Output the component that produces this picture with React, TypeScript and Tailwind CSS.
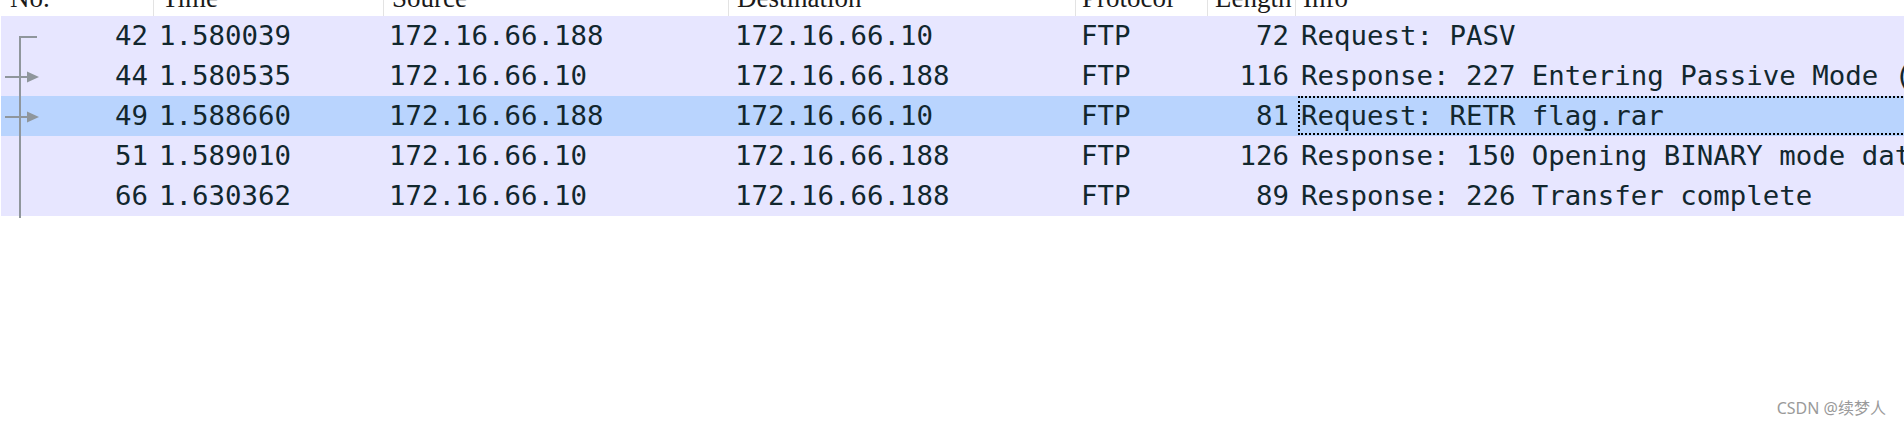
import React from "react";

type Row = {
  no: string;
  time: string;
  src: string;
  dst: string;
  proto: string;
  len: string;
  info: string;
  selected?: boolean;
  tree: "start" | "arrow" | "line" | "end";
};

const rows: Row[] = [
  { no: "42", time: "1.580039", src: "172.16.66.188", dst: "172.16.66.10", proto: "FTP", len: "72", info: "Request: PASV", tree: "start" },
  { no: "44", time: "1.580535", src: "172.16.66.10", dst: "172.16.66.188", proto: "FTP", len: "116", info: "Response: 227 Entering Passive Mode (172,16,66,10,195,80)", tree: "arrow" },
  { no: "49", time: "1.588660", src: "172.16.66.188", dst: "172.16.66.10", proto: "FTP", len: "81", info: "Request: RETR flag.rar", selected: true, tree: "arrow" },
  { no: "51", time: "1.589010", src: "172.16.66.10", dst: "172.16.66.188", proto: "FTP", len: "126", info: "Response: 150 Opening BINARY mode data connection for flag.rar", tree: "line" },
  { no: "66", time: "1.630362", src: "172.16.66.10", dst: "172.16.66.188", proto: "FTP", len: "89", info: "Response: 226 Transfer complete", tree: "end" },
];

const LINE = "#8f969c";

function Tree({ kind }: { kind: Row["tree"] }) {
  return (
    <svg
      width="44"
      height="40"
      viewBox="0 0 44 40"
      className="absolute left-[-1px] top-0 overflow-visible"
    >
      {kind === "start" && (
        <>
          <rect x="19" y="20" width="18" height="2" fill={LINE} />
          <rect x="19" y="20" width="2" height="20" fill={LINE} />
        </>
      )}
      {kind === "arrow" && (
        <>
          <rect x="19" y="0" width="2" height="40" fill={LINE} />
          <rect x="5" y="20" width="23" height="2" fill={LINE} />
          <polygon points="27,15.5 39,21 27,26.5" fill={LINE} />
        </>
      )}
      {kind === "line" && <rect x="19" y="0" width="2" height="40" fill={LINE} />}
      {kind === "end" && <rect x="19" y="0" width="2" height="42" fill={LINE} />}
    </svg>
  );
}

const mono = "font-['DejaVu_Sans_Mono','Liberation_Mono',monospace] text-[27.4px] leading-[40px] text-[#12272e] whitespace-pre";

export default function App() {
  return (
    <div className="relative w-[1904px] h-[427px] overflow-hidden bg-white">
      {/* header */}
      <div className="flex h-[16px] overflow-hidden pl-[1px] bg-white font-['Liberation_Serif','Times_New_Roman',serif] text-[27px] leading-[27px] text-[#1a1a1a] whitespace-nowrap">
        <div className="w-[153px] shrink-0 border-r border-[#e3e3e3] pl-[9px]"><div className="-mt-[15px]">No.</div></div>
        <div className="w-[230px] shrink-0 border-r border-[#e3e3e3] pl-[8px]"><div className="-mt-[15px]">Time</div></div>
        <div className="w-[345px] shrink-0 border-r border-[#e3e3e3] pl-[8px]"><div className="-mt-[15px]">Source</div></div>
        <div className="w-[347px] shrink-0 border-r border-[#e3e3e3] pl-[8px]"><div className="-mt-[15px]">Destination</div></div>
        <div className="w-[132px] shrink-0 border-r border-[#e3e3e3] pl-[6px]"><div className="-mt-[15px]">Protocol</div></div>
        <div className="w-[88px] shrink-0 border-r border-[#e3e3e3] pl-[7px]"><div className="-mt-[15px]">Length</div></div>
        <div className="flex-1 pl-[7px]"><div className="-mt-[15px]">Info</div></div>
      </div>

      {/* rows */}
      <div className="pl-[1px]">
        {rows.map((r) => (
          <div
            key={r.no}
            className={`flex h-[40px] ${r.selected ? "bg-[#b9d4fe]" : "bg-[#e7e6ff]"} ${mono}`}
          >
            <div className="relative w-[153px] shrink-0 pr-[6px] text-right">
              <Tree kind={r.tree} />
              {r.no}
            </div>
            <div className="w-[230px] shrink-0 pl-[5px]">{r.time}</div>
            <div className="w-[345px] shrink-0 pl-[5px]">{r.src}</div>
            <div className="w-[347px] shrink-0 pl-[6px]">{r.dst}</div>
            <div className="w-[132px] shrink-0 pl-[5px]">{r.proto}</div>
            <div className="w-[88px] shrink-0 pr-[7px] text-right">{r.len}</div>
            <div className="relative flex-1 overflow-hidden pl-[5px]">
              {r.selected && (
                <div className="absolute left-[2px] top-0 h-[39px] -right-[10px] border-2 border-dotted border-black" />
              )}
              {r.info}
            </div>
          </div>
        ))}
      </div>

      {/* watermark */}
      <div className="absolute right-[18px] bottom-[9px] font-['Noto_Sans','Noto_Sans_CJK_SC',sans-serif] text-[16px] leading-[20px] text-[#9a9a9a] [text-shadow:0_0_1px_#ffffff]">
        CSDN @续梦人
      </div>
    </div>
  );
}
